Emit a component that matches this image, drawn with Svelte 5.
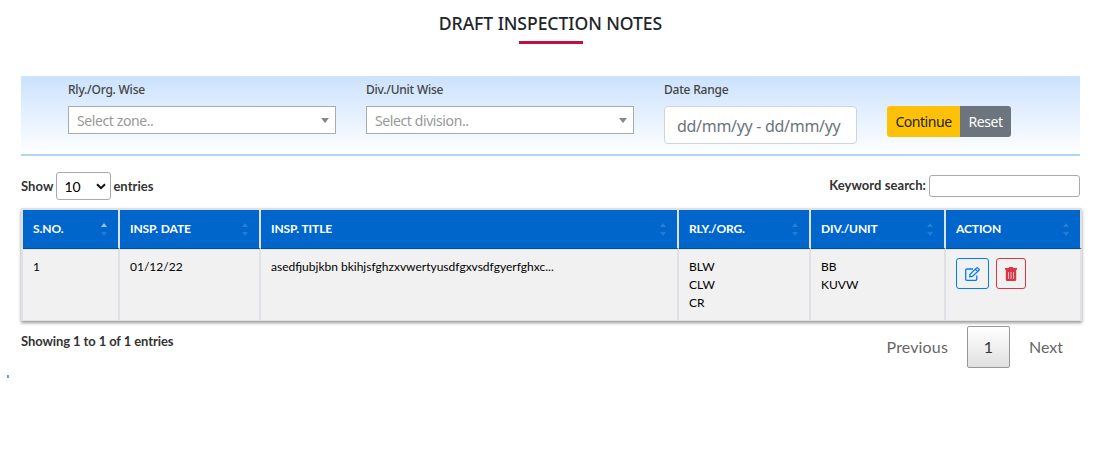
<script>
  const columns = ['S.NO.', 'INSP. DATE', 'INSP. TITLE', 'RLY./ORG.', 'DIV./UNIT', 'ACTION'];
  const filters = [
    { label: 'Rly./Org. Wise', placeholder: 'Select zone..' },
    { label: 'Div./Unit Wise', placeholder: 'Select division..' }
  ];
  const rows = [
    {
      no: 1,
      date: '01/12/22',
      title: 'asedfjubjkbn bkihjsfghzxvwertyusdfgxvsdfgyerfghxc...',
      orgs: ['BLW', 'CLW', 'CR'],
      units: ['BB', 'KUVW']
    }
  ];
</script>

<main>
  <h1><span>DRAFT INSPECTION NOTES</span></h1>

  <section class="filters">
    {#each filters as f}
      <div class="field">
        <div class="label"><span>{f.label}</span></div>
        <div class="combo"><span>{f.placeholder}</span><i></i></div>
      </div>
    {/each}
    <div class="field range">
      <div class="label"><span>Date Range</span></div>
      <div class="date"><span>dd/mm/yy - dd/mm/yy</span></div>
    </div>
    <div class="buttons">
      <button class="go"><span>Continue</span></button><button class="reset"><span>Reset</span></button>
    </div>
  </section>

  <div class="tools">
    <div class="length">
      <span>Show</span>
      <div class="select">
        <span>10</span>
        <svg width="10" height="7" viewBox="0 0 10 7"><path d="M1 1.2l4 4 4-4" fill="none" stroke="#111" stroke-width="2" /></svg>
      </div>
      <span>entries</span>
    </div>
    <div class="search"><span>Keyword search:</span><div class="box"></div></div>
  </div>

  <div class="table">
    <div class="row head">
      {#each columns as c, i}
        <div class="th">
          <span>{c}</span>
          <svg class="sort" width="6" height="13" viewBox="0 0 6 13">
            <path d="M0 4L3 0l3 4z" fill="#fff" opacity={i === 0 ? 0.6 : 0.16} />
            <path d="M0 9l3 4 3-4z" fill="#fff" opacity="0.14" />
          </svg>
        </div>
      {/each}
    </div>
    {#each rows as r}
      <div class="row body">
        <div class="td">{r.no}</div>
        <div class="td">{r.date}</div>
        <div class="td title"><span>{r.title}</span></div>
        <div class="td">{#each r.orgs as o}<div>{o}</div>{/each}</div>
        <div class="td">{#each r.units as u}<div>{u}</div>{/each}</div>
        <div class="td actions">
          <button class="edit" aria-label="Edit">
            <svg width="15" height="14" viewBox="0 0 15 14" fill="none" stroke="#007bff" stroke-width="1.3">
              <path d="M8 2H1.9Q.7 2 .7 3.2v8.9q0 1.2 1.2 1.2h8.7q1.2 0 1.2-1.2V8.5" />
              <path d="M4.7 9.8l.3-2.5L11.6.9q.5-.4 1 0l1.4 1.4q.4.5 0 1L7.4 9.5zM10.3 2.2l2.4 2.4" />
            </svg>
          </button>
          <button class="delete" aria-label="Delete">
            <svg width="12" height="14" viewBox="0 0 12 14">
              <path d="M0 1h3.500L4.200 0h3.600l.7 1H12v1.700H0zM.8 2.700h10.400V12.700q0 1.300-1.300 1.300H2.100Q.8 14 .8 12.700z" fill="#dc3545" />
              <path d="M3.500 5v7M6 5v7M8.500 5v7" stroke="#f1cbd0" stroke-width=".9" />
            </svg>
          </button>
        </div>
      </div>
    {/each}
  </div>

  <footer>
    <div class="info"><span>Showing 1 to 1 of 1 entries</span></div>
    <nav>
      <span class="prev">Previous</span>
      <span class="page">1</span>
      <span class="next">Next</span>
    </nav>
  </footer>
  <div class="mark"></div>
</main>

<style>
  :global(body) { background: #fff; overflow: hidden; }
  * { box-sizing: border-box; }
  span { white-space: nowrap; }
  main { height: 467px; padding: 0 21px; font-family: Lato, sans-serif; color: #212529; }
  h1 {
    margin: 0; height: 76px; padding-top: 11px; display: flex; flex-direction: column; align-items: center;
    font: 500 17.6px/24px "Noto Sans", sans-serif;
  }
  h1::after { content: ''; width: 64px; height: 3px; margin-top: 6px; background: #c10f41; }
  h1 span { letter-spacing: -0.07px; }
  .filters {
    height: 80px; padding: 5px 0 0 47px; display: flex; align-items: flex-start;
    border-bottom: 2px solid #b0d6f0; background: linear-gradient(#cbe2fd, #fff);
    font-family: "Noto Sans", sans-serif;
  }
  .field { width: 268px; margin-right: 30px; }
  .range { width: 193px; }
  .label { height: 25px; font-size: 12px; font-weight: 500; line-height: 18px; letter-spacing: -.22px; color: #444; }
  .combo {
    height: 28px; padding: 0 6px 0 8px; display: flex; align-items: center; justify-content: space-between;
    border: 1px solid #aaa; background: #fff; color: #999; font-size: 14px; line-height: 28px; letter-spacing: -.4px;
  }
  .combo span { position: relative; top: 1px; }
  .combo i { border: 4px solid transparent; border-top: 5px solid #888; border-bottom: 0; }
  .date {
    height: 38px; padding: 0 12px; border: 1px solid #ced4da; border-radius: 4px; background: #fff;
    color: #6c757d; font-size: 16px; line-height: 38px; letter-spacing: -.3px;
  }
  button { margin: 0; padding: 0; font-family: inherit; }
  .buttons { display: flex; margin-top: 25px; }
  .buttons button { height: 31px; border: 0; font-size: 14px; line-height: 32px; letter-spacing: -.45px; }
  .go { width: 73px; border-radius: 3px 0 0 3px; background: #ffc107; color: #212529; }
  .reset { width: 51px; border-radius: 0 3px 3px 0; background: #6c757d; color: #fff; }
  .tools { height: 52px; padding-top: 16px; display: flex; justify-content: space-between; font-size: 13px; font-weight: 700; color: #333; }
  .length { height: 28px; display: flex; align-items: center; gap: 2px; letter-spacing: .05px; }
  .length > span:first-child { margin-right: 1px; }
  .select {
    width: 55px; height: 28px; padding: 0 4px 0 7px; display: flex; align-items: center; justify-content: space-between;
    border: 1px solid #aaa; border-radius: 3px; color: #000; font-size: 14px; font-weight: 400;
  }
  .search { height: 22px; margin-top: 3px; display: flex; align-items: center; gap: 3px; letter-spacing: .06px; }
  .search span { position: relative; top: -1px; }
  .box { width: 151px; height: 22px; border: 1px solid #aaa; border-radius: 3px; }
  .table { width: 1061px; border: solid #dee2e6; border-width: 2px 0 1px 2px; box-shadow: 0 2px 3px rgba(0, 0, 0, .4); color: #000; font-size: 12px; }
  .row { display: grid; grid-template-columns: 97px 141px 418px 132px 135px 136px; }
  .th {
    height: 39px; padding: 0 11px 2px 10px; display: flex; align-items: center; justify-content: space-between;
    border-right: 2px solid #dee2e6; border-bottom: 1px solid #0b4c91; background: #06c; color: #fff; font-weight: 700;
    letter-spacing: -.1px;
  }
  .sort { margin-top: 2px; }
  .td { height: 71px; padding: 8px 10px 0; border-top: 1px solid #dee2e6; border-right: 2px solid #dee2e6; background: #f1f1f1; line-height: 18px; }
  .actions { display: flex; gap: 7px; }
  .actions button { height: 31px; display: grid; place-items: center; border: 1px solid; border-radius: 3px; background: transparent; }
  .actions .edit { width: 33px; color: #007bff; }
  .actions .delete { width: 30px; color: #dc3545; }
  footer { height: 54px; padding-top: 5px; display: flex; justify-content: space-between; }
  .info { font-size: 13px; font-weight: 700; line-height: 20px; letter-spacing: -.1px; color: #333; padding-top: 5px; }
  nav { display: flex; font-size: 16px; line-height: 42px; color: #666; }
  .prev { padding-right: 19px; letter-spacing: .15px; }
  .page { width: 43px; height: 42px; border: 1px solid #979797; border-radius: 2px; background: linear-gradient(#fff, #e0e0e0); color: #333; line-height: 40px; text-align: center; }
  .next { padding: 0 17px 0 19px; }
  .mark { width: 2px; height: 3px; margin-left: -14px; background: linear-gradient(90deg, #8f8f8f 50%, #5aa9e0 50%); }
</style>
